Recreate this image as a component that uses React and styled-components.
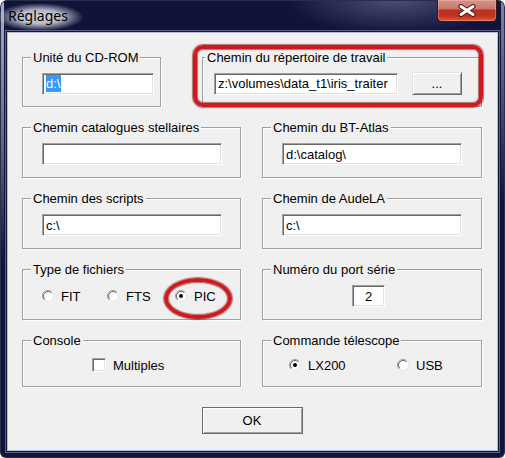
import React from 'react';
import styled, { createGlobalStyle } from 'styled-components';

const Global = createGlobalStyle`
  html, body { margin: 0; padding: 0; background: #ffffff; }
  body { font-family: "Liberation Sans", Arial, sans-serif; font-size: 13px; color: #000; }
`;

const Window = styled.div`
  position: relative;
  width: 505px;
  height: 458px;
  box-sizing: border-box;
  display: flex;
  flex-direction: column;
  padding: 0 8px 8px;
  border-radius: 7px 7px 6px 6px;
  overflow: hidden;
  background:
    linear-gradient(180deg, rgba(190,192,212,0.9) 0, rgba(170,172,195,0.55) 140px, rgba(170,172,195,0) 260px) 0 0 / 4px 100% no-repeat,
    linear-gradient(180deg, rgba(170,172,195,0.75) 0, rgba(170,172,195,0.35) 110px, rgba(170,172,195,0) 200px) right 0 top 0 / 4px 100% no-repeat,
    radial-gradient(ellipse 110px 34px at 395px 0, rgba(105,110,150,0.65), rgba(105,110,150,0)),
    #111439;
  box-shadow: inset 0 0 0 1px #2a2d4c;
`;

const TitleBar = styled.div`
  height: 33px;
  display: flex;
  align-items: flex-start;
  justify-content: space-between;
`;

const TitleText = styled.div`
  margin-left: -8px;
  padding: 4px 20px 6px 8px;
  font-family: "Noto Sans", "Open Sans", sans-serif;
  font-size: 14px;
  line-height: 18px;
  margin-top: 3px;
  color: #000;
  background: radial-gradient(ellipse 50% 50% at 45% 50%, rgba(218,219,230,0.97) 0%, rgba(210,211,224,0.85) 50%, rgba(200,201,218,0) 100%);
`;

const CloseButton = styled.div`
  width: 60px;
  height: 22px;
  box-sizing: border-box;
  display: flex;
  align-items: center;
  justify-content: center;
  border: 1px solid #3d1612;
  border-top: none;
  border-radius: 0 0 5px 5px;
  background:
    linear-gradient(180deg, #d69588 0%, #c8796b 42%, #b8301f 48%, #c3321f 75%, #da5a38 100%);
  box-shadow: inset 0 0 0 1px rgba(255,200,190,0.35);
`;

const Client = styled.div`
  flex: 1;
  display: flex;
  flex-direction: column;
  gap: 13px;
  padding: 17px 15px 0 14px;
  background: #f0f0f0;
  box-shadow: 0 0 0 1px #b8bcd2, 0 0 0 2px #13163a, 0 0 0 3px #5d6186;
`;

const TopRow = styled.div`
  display: flex;
  gap: 41px;
`;

const Row = styled.div`
  display: grid;
  grid-template-columns: 219px 220px;
  column-gap: 21px;
`;

const Group = styled.fieldset`
  box-sizing: border-box;
  margin: 0;
  min-width: 0;
  padding: 0;
  width: ${p => (p.$w ? `${p.$w}px` : 'auto')};
  height: ${p => p.$h || 58}px;
  border: 1px solid #a0a0a0;
  box-shadow: inset 1px 1px 0 #ffffff, 1px 1px 0 #ffffff;
`;

const Legend = styled.legend`
  margin-left: ${p => (p.$ml !== undefined ? p.$ml : 8)}px;
  padding: 0 2px;
  font-size: 13px;
  line-height: 15px;
  background: #f0f0f0;
`;

const Body = styled.div`
  height: ${p => p.$h || 38}px;
  display: flex;
  align-items: center;
  padding-left: ${p => p.$pl || 0}px;
  gap: ${p => p.$gap || 0}px;
`;

const Field = styled.div`
  box-sizing: border-box;
  width: ${p => p.$w}px;
  height: 22px;
  padding: 0 3px;
  display: flex;
  align-items: center;
  justify-content: ${p => (p.$center ? 'center' : 'flex-start')};
  background: #ffffff;
  border: 1px solid;
  border-color: #a0a0a0 #ffffff #ffffff #a0a0a0;
  box-shadow: inset 1px 1px 0 #696969, inset -1px -1px 0 #e3e3e3;
  font-size: 13px;
  white-space: nowrap;
  overflow: hidden;
`;

const Selected = styled.span`
  background: #3399ff;
  color: #ffffff;
  padding: 1px 1px 1px 0;
`;

const RaisedButton = styled.div`
  box-sizing: border-box;
  width: ${p => p.$w}px;
  height: ${p => p.$h}px;
  display: flex;
  align-items: center;
  justify-content: center;
  background: #f0f0f0;
  font-size: 13px;
  border: 1px solid;
  border-color: ${p => (p.$default ? '#6a6a6a' : '#e3e3e3 #696969 #696969 #e3e3e3')};
  box-shadow: inset 1px 1px 0 #ffffff, inset -1px -1px 0 #a0a0a0;
`;

const Option = styled.div`
  display: flex;
  align-items: center;
  gap: 7px;
  width: ${p => (p.$w ? `${p.$w}px` : 'auto')};
  font-size: 13px;
`;

const RadioSvg = styled.svg`
  flex: none;
  display: block;
`;

const CheckBox = styled.div`
  box-sizing: border-box;
  width: 14px;
  height: 14px;
  background: #ffffff;
  border: 1px solid;
  border-color: #a0a0a0 #ffffff #ffffff #a0a0a0;
  box-shadow: inset 1px 1px 0 #696969, inset -1px -1px 0 #e3e3e3;
`;

const Footer = styled.div`
  display: flex;
  justify-content: center;
  padding-top: 7px;
`;

const RedBox = styled.div`
  position: absolute;
  left: ${p => p.$x}px;
  top: ${p => p.$y}px;
  width: ${p => p.$w}px;
  height: ${p => p.$h}px;
  box-sizing: border-box;
  border: 4px solid #cc1a1f;
  border-radius: ${p => p.$r};
  box-shadow: 0 0 1px 1px rgba(120,10,10,0.55), inset 0 0 1px 1px rgba(120,10,10,0.55);
  pointer-events: none;
`;

const Radio = ({ checked }) => (
  <RadioSvg width="12" height="12" viewBox="0 0 12 12">
    <circle cx="6" cy="6" r="5.5" fill="#ffffff" stroke="#e3e3e3" strokeWidth="1" />
    <path d="M2.11 9.89 A5.5 5.5 0 0 1 9.89 2.11" fill="none" stroke="#a0a0a0" strokeWidth="1" />
    <path d="M2.82 9.18 A4.5 4.5 0 0 1 9.18 2.82" fill="none" stroke="#696969" strokeWidth="1" />
    {checked && <circle cx="6" cy="6" r="2" fill="#000000" />}
  </RadioSvg>
);

const CloseX = () => (
  <svg width="18" height="13" viewBox="0 0 18 13">
    <path d="M3 2.5 L15 10.5 M15 2.5 L3 10.5" stroke="#4a1a14" strokeWidth="5" strokeLinecap="round" />
    <path d="M3 2.5 L15 10.5 M15 2.5 L3 10.5" stroke="#ffffff" strokeWidth="3" strokeLinecap="round" />
  </svg>
);

export default function App() {
  return (
    <>
      <Global />
      <Window>
        <TitleBar>
          <TitleText>Réglages</TitleText>
          <CloseButton><CloseX /></CloseButton>
        </TitleBar>
        <Client>
          <TopRow>
            <Group $w={139} $h={57}>
              <Legend>Unité du CD-ROM</Legend>
              <Body $pl={19} $h={37}>
                <Field $w={112}><Selected>d:\</Selected></Field>
              </Body>
            </Group>
            <Group $w={280} $h={57}>
              <Legend $ml={2}>Chemin du répertoire de travail</Legend>
              <Body $pl={11} $gap={14} $h={37}>
                <Field $w={184}>z:\volumes\data_t1\iris_traiter</Field>
                <RaisedButton $w={50} $h={23}>...</RaisedButton>
              </Body>
            </Group>
          </TopRow>
          <Row>
            <Group>
              <Legend>Chemin catalogues stellaires</Legend>
              <Body $pl={19}><Field $w={180} /></Body>
            </Group>
            <Group>
              <Legend>Chemin du BT-Atlas</Legend>
              <Body $pl={19}><Field $w={180}>d:\catalog\</Field></Body>
            </Group>
          </Row>
          <Row>
            <Group>
              <Legend>Chemin des scripts</Legend>
              <Body $pl={19}><Field $w={180}>c:\</Field></Body>
            </Group>
            <Group>
              <Legend>Chemin de AudeLA</Legend>
              <Body $pl={19}><Field $w={180}>c:\</Field></Body>
            </Group>
          </Row>
          <Row>
            <Group>
              <Legend>Type de fichiers</Legend>
              <Body $pl={19}>
                <Option $w={65}><Radio />FIT</Option>
                <Option $w={68}><Radio />FTS</Option>
                <Option><Radio checked />PIC</Option>
              </Body>
            </Group>
            <Group>
              <Legend>Numéro du port série</Legend>
              <Body $pl={89}><Field $w={33} $center>2</Field></Body>
            </Group>
          </Row>
          <Row>
            <Group $h={54}>
              <Legend>Console</Legend>
              <Body $pl={69} $h={34}>
                <Option><CheckBox />Multiples</Option>
              </Body>
            </Group>
            <Group $h={54}>
              <Legend>Commande télescope</Legend>
              <Body $pl={26} $h={34}>
                <Option $w={108}><Radio checked />LX200</Option>
                <Option><Radio />USB</Option>
              </Body>
            </Group>
          </Row>
          <Footer>
            <RaisedButton $w={101} $h={27} $default>OK</RaisedButton>
          </Footer>
        </Client>
        <RedBox $x={193} $y={45} $w={290} $h={62} $r="10px" />
        <RedBox $x={164} $y={278} $w={68} $h={41} $r="50%" />
      </Window>
    </>
  );
}
